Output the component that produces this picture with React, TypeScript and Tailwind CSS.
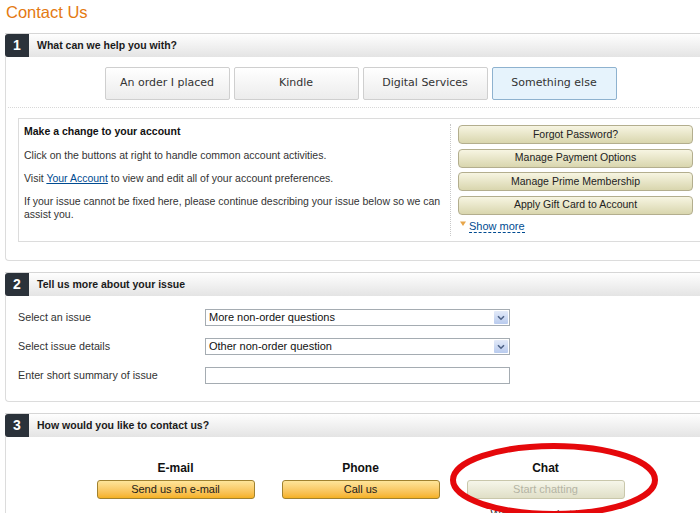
import type { ReactNode } from "react";

const font = { fontFamily: '"Liberation Sans", Arial, sans-serif' };

const SectionHead = ({ n, title }: { n: number; title: string }) => (
  <div className="flex h-6 items-stretch border-t border-r border-[#d6d6d6] bg-linear-to-b from-[#fefefe] to-[#e4e4e4]">
    <div className="flex w-6 items-center justify-center rounded-l-[3px] bg-[#2b323a] text-[14px] font-bold text-white">
      {n}
    </div>
    <div className="flex items-center pl-2 text-[10.5px] font-bold text-[#1a1a1a]">
      {title}
    </div>
  </div>
);

const Section = ({ n, title, children }: { n: number; title: string; children: ReactNode }) => (
  <div className="w-[710px]">
    <SectionHead n={n} title={title} />
    <div className="rounded-bl-[4px] border-b border-l border-[#dcdcdc]">{children}</div>
  </div>
);

const Topic = ({ label, active }: { label: string; active?: boolean }) => (
  <div
    className={
      "flex h-[33px] w-[125px] items-center justify-center rounded-[2px] border text-[11px] text-[#333] " +
      (active
        ? "border-[#8eb2cf] bg-[#e6f3fc]"
        : "border-[#cfcfcf] bg-linear-to-b from-white to-[#ececec]")
    }
    style={{ fontFamily: '"DejaVu Sans", Verdana, sans-serif' }}
  >
    {label}
  </div>
);

const AccountBtn = ({ label }: { label: string }) => (
  <div className="flex h-[19px] w-[235px] items-center justify-center rounded-[4px] border border-[#b3ae8e] bg-linear-to-b from-[#f7f5e2] to-[#d9d6ae] text-[10.5px] text-[#222]">
    {label}
  </div>
);

const Select = ({ value }: { value: string }) => (
  <div className="flex h-[17px] w-[305px] items-center justify-between border border-[#a5acb2] bg-white pl-[3px] text-[11px] text-[#111]">
    <span>{value}</span>
    <span className="mr-px flex h-[13px] w-[14px] items-center justify-center rounded-[1px] bg-linear-to-b from-[#e3eaf8] to-[#b9cbee]">
      <svg width="8" height="6" viewBox="0 0 8 6">
        <path d="M1 1.2 L4 4.2 L7 1.2" fill="none" stroke="#4d6185" strokeWidth="1.6" />
      </svg>
    </span>
  </div>
);

const ContactCol = ({ title, btn, off }: { title: string; btn: string; off?: boolean }) => (
  <div className="flex w-[185px] flex-col items-center">
    <div className="h-[14px] text-[12px] leading-[14px] font-bold text-[#111]">{title}</div>
    <div
      className={
        "mt-[5px] flex h-[19px] w-[158px] items-center justify-center rounded-[3px] border text-[11px] " +
        (off
          ? "border-[#c9c7ab] bg-linear-to-b from-[#f6f6ea] to-[#e0dfc7] text-[#b4b4a4]"
          : "border-[#a1822f] bg-linear-to-b from-[#fee59a] to-[#f5b120] text-[#1b1b1b]")
      }
    >
      {btn}
    </div>
    {off && <div className="mt-[7px] text-[11px] text-[#333]">We're sorry, chat is full</div>}
  </div>
);

export default function App() {
  return (
    <div className="relative h-[513px] w-[700px] overflow-hidden bg-white" style={font}>
      <h1 className="pt-[3px] pl-[6px] text-[16.5px] leading-[19px] text-[#e47911]">Contact Us</h1>

      <div className="mt-[11px] flex flex-col gap-[11px] pl-[5px]">
        <Section n={1} title="What can we help you with?">
          <div className="flex justify-center gap-1 pt-[10px]">
            <Topic label="An order I placed" />
            <Topic label="Kindle" />
            <Topic label="Digital Services" />
            <Topic label="Something else" active />
          </div>
          <div className="mx-[2px] mt-[7px] border-t border-dotted border-[#d8d8d8]" />
          <div className="mx-[12px] mt-[10px] mb-[18px] flex h-[124px] border border-[#dcdcdc] text-[10.5px] text-[#333]">
            <div className="w-[431px] px-[5px] pt-[6px] leading-[13px]">
              <p className="font-bold text-[#111]">Make a change to your account</p>
              <p className="mt-[11px]">Click on the buttons at right to handle common account activities.</p>
              <p className="mt-[10px]">
                Visit <span className="text-[#004b91] underline">Your Account</span> to view and edit all of your
                account preferences.
              </p>
              <p className="mt-[10px]">
                If your issue cannot be fixed here, please continue describing your issue below so we can assist
                you.
              </p>
            </div>
            <div className="my-[5px] flex flex-col gap-[4.5px] border-l border-dotted border-[#c8c8c8] pt-px pl-[7px]">
              <AccountBtn label="Forgot Password?" />
              <AccountBtn label="Manage Payment Options" />
              <AccountBtn label="Manage Prime Membership" />
              <AccountBtn label="Apply Gift Card to Account" />
              <div className="mt-px flex items-start gap-[3px] pl-[2px]">
                <svg width="6" height="6" viewBox="0 0 6 6" className="mt-px">
                  <path d="M0 0.5 L6 0.5 L3 5 Z" fill="#e8a64a" />
                </svg>
                <span className="border-b border-dashed border-[#004b91] text-[11px] leading-[12px] text-[#004b91]">
                  Show more
                </span>
              </div>
            </div>
          </div>
        </Section>

        <Section n={2} title="Tell us more about your issue">
          <div className="flex flex-col gap-[12px] pt-[13px] pb-[17px] pl-[12px] text-[10.75px] text-[#333]">
            <div className="flex items-center">
              <span className="w-[187px]">Select an issue</span>
              <Select value="More non-order questions" />
            </div>
            <div className="flex items-center">
              <span className="w-[187px]">Select issue details</span>
              <Select value="Other non-order question" />
            </div>
            <div className="flex items-center">
              <span className="w-[187px]">Enter short summary of issue</span>
              <div className="h-[17px] w-[305px] border border-[#a5acb2] bg-white" />
            </div>
          </div>
        </Section>

        <Section n={3} title="How would you like to contact us?">
          <div className="flex justify-center pt-[24px] pb-4">
            <ContactCol title="E-mail" btn="Send us an e-mail" />
            <ContactCol title="Phone" btn="Call us" />
            <ContactCol title="Chat" btn="Start chatting" off />
          </div>
        </Section>
      </div>

      {/* red marker ring round the chat option */}
      <svg className="absolute top-[442px] left-[449px]" width="216" height="80" viewBox="0 0 216 80">
        <ellipse cx="105" cy="38" rx="101" ry="34" fill="none" stroke="#e5080b" strokeWidth="6" />
      </svg>
    </div>
  );
}
